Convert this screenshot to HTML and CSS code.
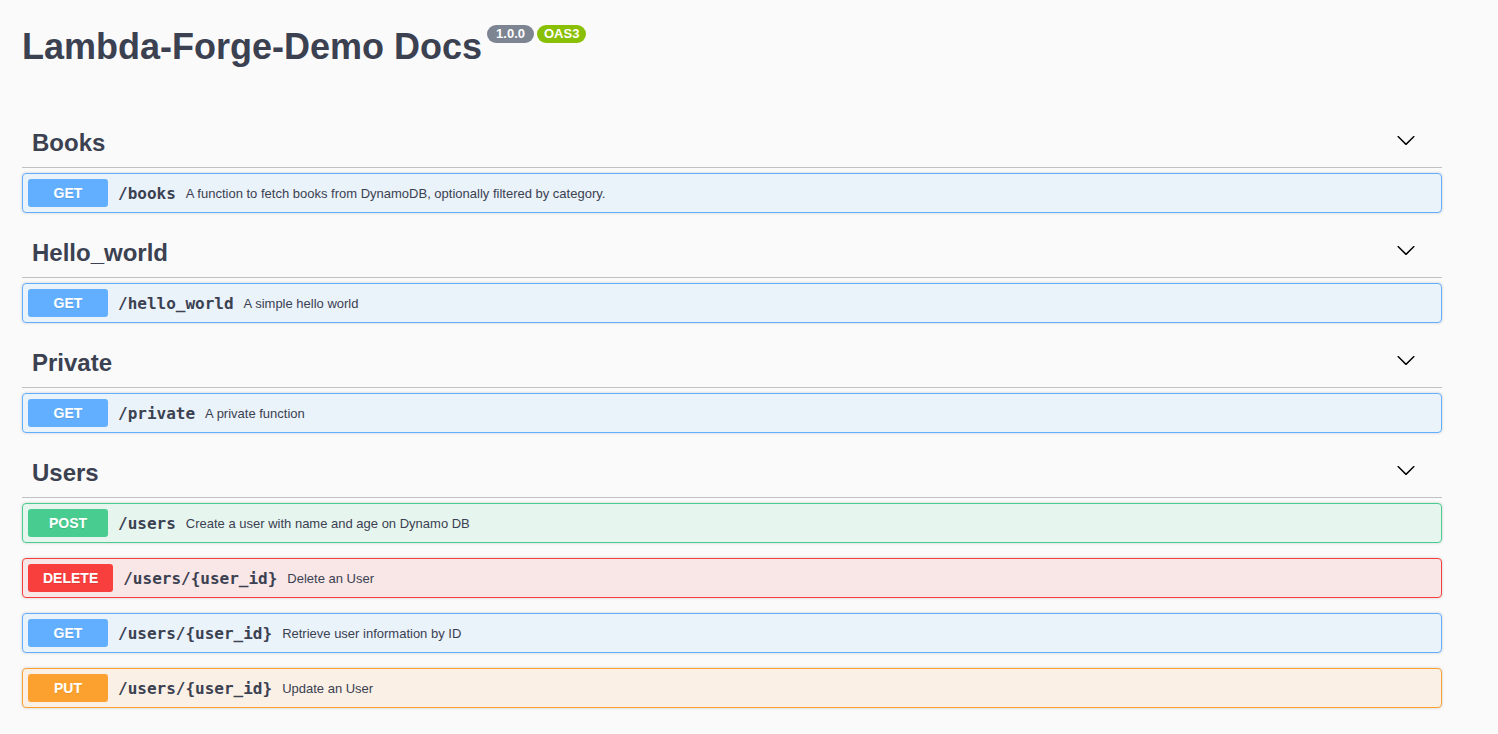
FILE: index.html
```html
<!DOCTYPE html>
<html lang="en">
<head>
<meta charset="utf-8">
<title>Lambda-Forge-Demo Docs</title>
<link rel="stylesheet" href="styles.css">
</head>
<body>
<div class="wrapper">
  <div class="info">
    <h2 class="title">Lambda-Forge-Demo Docs
      <span class="badges">
        <small class="badge badge-version">1.0.0</small>
        <small class="badge badge-oas">OAS3</small>
      </span>
    </h2>
  </div>

  <section class="tag-section">
    <h3 class="tag"><span class="tag-name">Books</span>
      <button class="expand"><svg width="20" height="20" viewBox="0 0 20 20"><path d="M17.418 6.109c.272-.268.709-.268.979 0s.271.701 0 .969l-7.908 7.83c-.27.268-.707.268-.979 0l-7.908-7.83c-.27-.268-.27-.701 0-.969.271-.268.709-.268.98 0L10 13.25l7.418-7.141z"/></svg></button>
    </h3>
    <div class="opblock opblock-get">
      <span class="method">GET</span>
      <span class="path">/books</span>
      <span class="desc">A function to fetch books from DynamoDB, optionally filtered by category.</span>
    </div>
  </section>

  <section class="tag-section">
    <h3 class="tag"><span class="tag-name">Hello_world</span>
      <button class="expand"><svg width="20" height="20" viewBox="0 0 20 20"><path d="M17.418 6.109c.272-.268.709-.268.979 0s.271.701 0 .969l-7.908 7.83c-.27.268-.707.268-.979 0l-7.908-7.83c-.27-.268-.27-.701 0-.969.271-.268.709-.268.98 0L10 13.25l7.418-7.141z"/></svg></button>
    </h3>
    <div class="opblock opblock-get">
      <span class="method">GET</span>
      <span class="path">/hello_world</span>
      <span class="desc">A simple hello world</span>
    </div>
  </section>

  <section class="tag-section">
    <h3 class="tag"><span class="tag-name">Private</span>
      <button class="expand"><svg width="20" height="20" viewBox="0 0 20 20"><path d="M17.418 6.109c.272-.268.709-.268.979 0s.271.701 0 .969l-7.908 7.83c-.27.268-.707.268-.979 0l-7.908-7.83c-.27-.268-.27-.701 0-.969.271-.268.709-.268.98 0L10 13.25l7.418-7.141z"/></svg></button>
    </h3>
    <div class="opblock opblock-get">
      <span class="method">GET</span>
      <span class="path">/private</span>
      <span class="desc">A private function</span>
    </div>
  </section>

  <section class="tag-section">
    <h3 class="tag"><span class="tag-name">Users</span>
      <button class="expand"><svg width="20" height="20" viewBox="0 0 20 20"><path d="M17.418 6.109c.272-.268.709-.268.979 0s.271.701 0 .969l-7.908 7.83c-.27.268-.707.268-.979 0l-7.908-7.83c-.27-.268-.27-.701 0-.969.271-.268.709-.268.98 0L10 13.25l7.418-7.141z"/></svg></button>
    </h3>
    <div class="opblock opblock-post">
      <span class="method">POST</span>
      <span class="path">/users</span>
      <span class="desc">Create a user with name and age on Dynamo DB</span>
    </div>
    <div class="opblock opblock-delete">
      <span class="method">DELETE</span>
      <span class="path">/users/{user_id}</span>
      <span class="desc">Delete an User</span>
    </div>
    <div class="opblock opblock-get">
      <span class="method">GET</span>
      <span class="path">/users/{user_id}</span>
      <span class="desc">Retrieve user information by ID</span>
    </div>
    <div class="opblock opblock-put">
      <span class="method">PUT</span>
      <span class="path">/users/{user_id}</span>
      <span class="desc">Update an User</span>
    </div>
  </section>
</div>
</body>
</html>
```

FILE: styles.css
```css
html, body {
  margin: 0;
  padding: 0;
  background: #fafafa;
}

body {
  font-family: "Liberation Sans", Arial, sans-serif;
  color: #3b4151;
}

.wrapper {
  width: 1420px;
  padding-left: 22px;
}

.info {
  padding-top: 29px;
}

.title {
  display: flex;
  align-items: flex-start;
  margin: 0 0 53px;
  font-size: 36px;
  line-height: 36px;
  font-weight: 700;
  color: #3b4151;
}

.badges {
  display: flex;
  gap: 3px;
  margin-left: 5px;
  margin-top: -4px;
}

.badge {
  display: inline-block;
  font-size: 13px;
  line-height: 14px;
  font-weight: 700;
  color: #fff;
  padding: 2px 7px;
  border-radius: 57px;
}

.badge-version {
  background: #7d8492;
  padding: 2px 9px;
}

.badge-oas {
  background: #89bf04;
}

.tag {
  display: flex;
  align-items: center;
  margin: 0 0 5px;
  padding: 10px 20px 10px 10px;
  border-bottom: 1px solid rgba(59, 65, 81, 0.3);
  font-size: 24px;
  line-height: 29px;
  font-weight: 700;
  color: #3b4151;
}

.tag-name {
  flex: 1 1 auto;
}

.expand {
  display: flex;
  padding: 0 6px;
  margin: 0 0 6px;
  border: none;
  background: none;
}

.expand svg {
  width: 20px;
  height: 20px;
  fill: #000;
}

.opblock {
  display: flex;
  align-items: center;
  margin: 0 0 15px;
  padding: 5px;
  border: 1px solid;
  border-radius: 4px;
  box-shadow: 0 0 3px rgba(0, 0, 0, 0.19);
}

.method {
  min-width: 80px;
  box-sizing: border-box;
  padding: 6px 15px;
  border-radius: 3px;
  font-size: 14px;
  line-height: 16px;
  font-weight: 700;
  text-align: center;
  color: #fff;
  text-shadow: 0 1px 0 rgba(0, 0, 0, 0.1);
}

.path {
  padding: 0 10px;
  font-family: "DejaVu Sans Mono", monospace;
  font-size: 16px;
  font-weight: 700;
  color: #3b4151;
}

.desc {
  flex: 1 1 auto;
  font-size: 13px;
  color: #3b4151;
}

.opblock-get {
  background: rgba(97, 175, 254, 0.1);
  border-color: #61affe;
}
.opblock-get .method { background: #61affe; }

.opblock-post {
  background: rgba(73, 204, 144, 0.1);
  border-color: #49cc90;
}
.opblock-post .method { background: #49cc90; }

.opblock-delete {
  background: rgba(249, 62, 62, 0.1);
  border-color: #f93e3e;
}
.opblock-delete .method { background: #f93e3e; }

.opblock-put {
  background: rgba(252, 161, 48, 0.1);
  border-color: #fca130;
}
.opblock-put .method { background: #fca130; }
```
